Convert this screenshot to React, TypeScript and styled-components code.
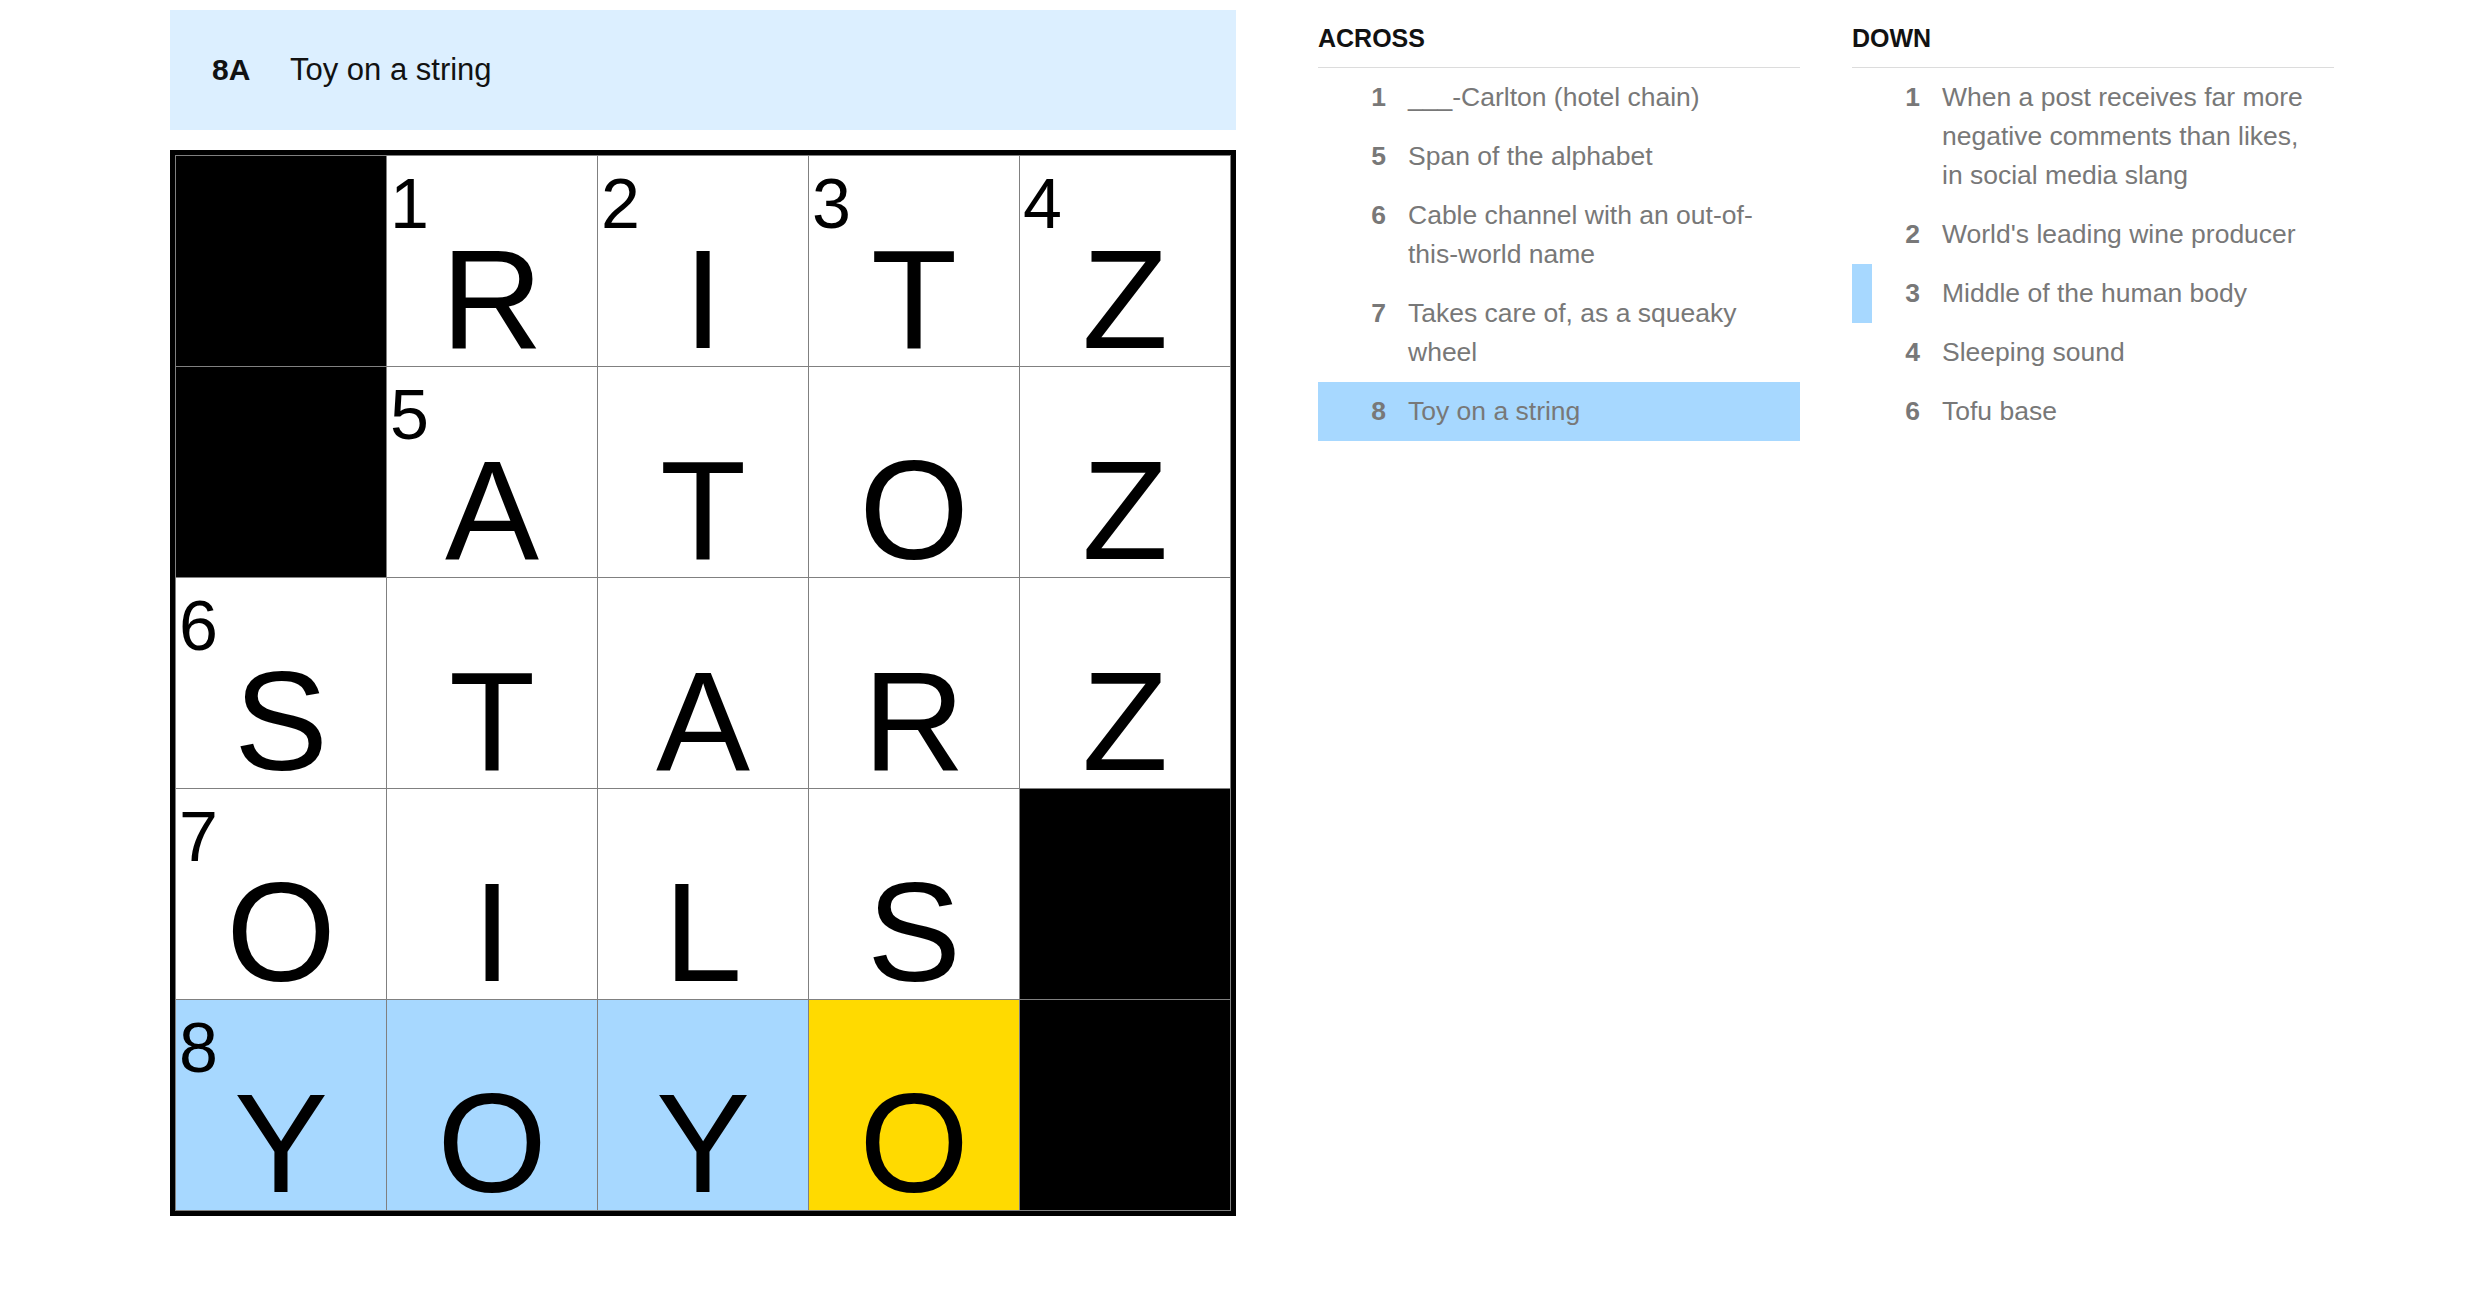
import React from "react";
import styled, { createGlobalStyle } from "styled-components";

// page basics
const GlobalStyle = createGlobalStyle`
  body {
    margin: 0;
    background: #ffffff;
    font-family: "Liberation Sans", Arial, sans-serif;
  }
`;

const Page = styled.div`
  display: flex;
  align-items: flex-start;
  gap: 82px;
  padding: 10px 0 0 170px;
`;

const Board = styled.div`
  display: flex;
  flex-direction: column;
  gap: 20px;
  width: 1066px;
`;

const ClueBar = styled.div`
  height: 120px;
  background: #dcefff;
  display: flex;
  align-items: center;
  padding-left: 42px;
  color: #121212;
`;

const BarLabel = styled.span`
  width: 78px;
  font-size: 30px;
  font-weight: 700;
`;

const BarText = styled.span`
  font-size: 31px;
`;

const Grid = styled.div`
  display: grid;
  grid-template-columns: repeat(5, 210px);
  grid-auto-rows: 210px;
  gap: 1px;
  padding: 1px;
  width: fit-content;
  background: #808080;
  border: 5px solid #000000;
`;

type Fill = "white" | "black" | "word" | "current";

const fills: Record<Fill, string> = {
  white: "#ffffff",
  black: "#000000",
  word: "#a7d8ff",
  current: "#ffda00",
};

const Cell = styled.div<{ $fill: Fill }>`
  position: relative;
  box-sizing: border-box;
  display: flex;
  justify-content: center;
  align-items: flex-end;
  padding-bottom: 17px;
  background: ${(p) => fills[p.$fill]};
`;

const CellNum = styled.span`
  position: absolute;
  top: 13px;
  left: 3px;
  font-size: 70px;
  line-height: 70px;
  color: #000;
`;

const Letter = styled.span`
  font-size: 141px;
  line-height: 100px;
  color: #000;
`;

const Lists = styled.div`
  display: flex;
  gap: 52px;
  padding-top: 12.7px;
`;

const ClueColumn = styled.section`
  width: 482px;
`;

const ColumnTitle = styled.h3`
  margin: 0;
  padding-bottom: 14px;
  border-bottom: 1px solid #dcdcdc;
  font-size: 25px;
  line-height: 30px;
  font-weight: 700;
  color: #121212;
  text-transform: uppercase;
`;

const ClueItems = styled.ol`
  list-style: none;
  margin: 0;
  padding: 0;
`;

type Mark = "none" | "active" | "cross";

const ClueItem = styled.li<{ $mark: Mark }>`
  display: flex;
  padding: 10px 19px 10px 0;
  border-left: 20px solid
    ${(p) => (p.$mark === "none" ? "transparent" : "#a7d8ff")};
  background: ${(p) => (p.$mark === "active" ? "#a7d8ff" : "transparent")};
  font-size: 26.5px;
  line-height: 39px;
  color: #787878;
`;

const ClueNum = styled.span`
  flex: 0 0 48px;
  margin-right: 22px;
  text-align: right;
  font-weight: 700;
`;

const ClueText = styled.span`
  flex: 1;
`;

type Square = { l?: string; n?: number; f: Fill };

const rows: Square[][] = [
  [{ f: "black" }, { l: "R", n: 1, f: "white" }, { l: "I", n: 2, f: "white" }, { l: "T", n: 3, f: "white" }, { l: "Z", n: 4, f: "white" }],
  [{ f: "black" }, { l: "A", n: 5, f: "white" }, { l: "T", f: "white" }, { l: "O", f: "white" }, { l: "Z", f: "white" }],
  [{ l: "S", n: 6, f: "white" }, { l: "T", f: "white" }, { l: "A", f: "white" }, { l: "R", f: "white" }, { l: "Z", f: "white" }],
  [{ l: "O", n: 7, f: "white" }, { l: "I", f: "white" }, { l: "L", f: "white" }, { l: "S", f: "white" }, { f: "black" }],
  [{ l: "Y", n: 8, f: "word" }, { l: "O", f: "word" }, { l: "Y", f: "word" }, { l: "O", f: "current" }, { f: "black" }],
];

type Clue = { n: number; text: string; mark?: Mark };

const across: Clue[] = [
  { n: 1, text: "___-Carlton (hotel chain)" },
  { n: 5, text: "Span of the alphabet" },
  { n: 6, text: "Cable channel with an out-of-this-world name" },
  { n: 7, text: "Takes care of, as a squeaky wheel" },
  { n: 8, text: "Toy on a string", mark: "active" },
];

const down: Clue[] = [
  { n: 1, text: "When a post receives far more negative comments than likes, in social media slang" },
  { n: 2, text: "World's leading wine producer" },
  { n: 3, text: "Middle of the human body", mark: "cross" },
  { n: 4, text: "Sleeping sound" },
  { n: 6, text: "Tofu base" },
];

const ClueSection = ({ title, clues }: { title: string; clues: Clue[] }) => (
  <ClueColumn>
    <ColumnTitle>{title}</ColumnTitle>
    <ClueItems>
      {clues.map((c) => (
        <ClueItem key={c.n} $mark={c.mark ?? "none"}>
          <ClueNum>{c.n}</ClueNum>
          <ClueText>{c.text}</ClueText>
        </ClueItem>
      ))}
    </ClueItems>
  </ClueColumn>
);

const App = () => {
  return (
    <>
      <GlobalStyle />
      <Page>
        <Board>
          <ClueBar>
            <BarLabel>8A</BarLabel>
            <BarText>Toy on a string</BarText>
          </ClueBar>
          <Grid>
            {rows.flatMap((row, r) =>
              row.map((sq, c) => (
                <Cell key={`${r}-${c}`} $fill={sq.f}>
                  {sq.n && <CellNum>{sq.n}</CellNum>}
                  {sq.l && <Letter>{sq.l}</Letter>}
                </Cell>
              ))
            )}
          </Grid>
        </Board>
        <Lists>
          <ClueSection title="Across" clues={across} />
          <ClueSection title="Down" clues={down} />
        </Lists>
      </Page>
    </>
  );
};

export default App;
